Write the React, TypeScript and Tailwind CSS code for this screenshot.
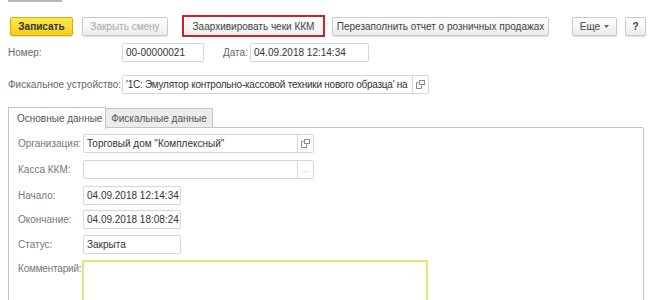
import React from "react";

const font = { fontFamily: '"Liberation Sans", Arial, sans-serif' };

function Btn({ children, className = "" }: { children: React.ReactNode; className?: string }) {
  return (
    <div
      className={
        "flex items-center justify-center h-[19px] rounded-[2px] border border-[#c9c9c9] bg-gradient-to-b from-[#ffffff] to-[#ececec] shadow-[0_1px_1px_rgba(0,0,0,0.12)] text-[10px] text-[#444] whitespace-nowrap " +
        className
      }
    >
      {children}
    </div>
  );
}

function Input({ children, className = "" }: { children?: React.ReactNode; className?: string }) {
  return (
    <div
      className={
        "flex items-center h-[19px] border border-[#d6d6d6] rounded-[2px] bg-white px-[3px] text-[10px] text-[#333] whitespace-nowrap overflow-hidden " +
        className
      }
    >
      {children}
    </div>
  );
}

function OpenIcon() {
  return (
    <svg width="9" height="9" viewBox="0 0 9 9" fill="none" stroke="#8a8a8a" strokeWidth="1">
      <rect x="3.5" y="0.5" width="5" height="4" />
      <path d="M2.5 2.5 H0.5 V8.5 H5.5 V5.5" />
    </svg>
  );
}

function InputWithBtn({
  children,
  className = "",
  btn,
}: {
  children?: React.ReactNode;
  className?: string;
  btn: React.ReactNode;
}) {
  return (
    <div
      className={
        "flex items-stretch h-[19px] border border-[#d6d6d6] rounded-[2px] bg-white text-[10px] text-[#333] " + className
      }
    >
      <div className="flex-1 flex items-center px-[3px] whitespace-nowrap overflow-hidden">{children}</div>
      <div className="w-[16px] border-l border-[#d6d6d6] flex items-center justify-center">{btn}</div>
    </div>
  );
}

export default function App() {
  return (
    <div className="w-[660px] h-[300px] bg-white overflow-hidden relative" style={font}>
      <div className="ml-[8px] w-[54px] h-[2px] bg-[#b8b8b8]" />

      {/* toolbar */}
      <div className="flex items-center mt-[13px] h-[22px]">
        <div className="ml-[10px] w-[63px] h-[19px] flex items-center justify-center rounded-[2px] border border-[#d4b000] bg-gradient-to-b from-[#ffe84d] to-[#f5cf0a] shadow-[0_1px_1px_rgba(0,0,0,0.15)] text-[10px] font-bold text-[#333]">
          Записать
        </div>
        <Btn className="ml-[9px] w-[86px] text-[#aaa]">Закрыть смену</Btn>
        <div className="ml-[14px] w-[143px] h-[22px] border-2 border-[#c8232c] flex">
          <div className="flex-1 flex items-center justify-center bg-gradient-to-b from-[#ffffff] to-[#efefef] text-[10px] text-[#444] whitespace-nowrap">
            Заархивировать чеки ККМ
          </div>
        </div>
        <Btn className="ml-[7px] w-[217px]">Перезаполнить отчет о розничных продажах</Btn>
        <Btn className="ml-[23px] w-[45px] gap-[4px]">
          <span>Еще</span>
          <svg width="5" height="3" viewBox="0 0 5 3">
            <path d="M0 0 H5 L2.5 3 Z" fill="#666" />
          </svg>
        </Btn>
        <Btn className="ml-[8px] w-[21px] font-bold text-[#333]">?</Btn>
      </div>

      {/* Номер / Дата */}
      <div className="flex items-center mt-[6px] h-[19px] text-[10px] text-[#666]">
        <div className="ml-[8px] w-[114px]">Номер:</div>
        <Input className="w-[82px]">00-00000021</Input>
        <div className="ml-[19px] w-[27px]">Дата:</div>
        <Input className="w-[119px]">04.09.2018 12:14:34</Input>
      </div>

      {/* Фискальное устройство */}
      <div className="flex items-center mt-[13px] h-[19px] text-[10px] text-[#666]">
        <div className="ml-[8px] w-[114px] whitespace-nowrap">Фискальное устройство:</div>
        <InputWithBtn className="w-[307px]" btn={<OpenIcon />}>
          <span className="tracking-[-0.25px]">'1С: Эмулятор контрольно-кассовой техники нового образца' на</span>
        </InputWithBtn>
      </div>

      {/* tabs */}
      <div className="flex items-end mt-[12px] ml-[8px] h-[22px]">
        <div className="w-[98px] h-[22px] border border-b-0 border-[#c4c4c4] bg-white flex items-center pl-[8px] text-[10px] text-[#555] relative top-[1px] whitespace-nowrap">
          Основные данные
        </div>
        <div className="w-[107px] h-[20px] border border-l-0 border-[#c4c4c4] bg-[#ececec] flex items-center justify-center text-[10px] text-[#555] whitespace-nowrap">
          Фискальные данные
        </div>
        <div className="w-[430px] border-b border-[#c4c4c4]" />
      </div>

      {/* panel */}
      <div className="ml-[8px] w-[636px] h-[200px] border-l border-r border-[#c4c4c4] pt-[6px] text-[10px] text-[#777]">
        <div className="flex items-center h-[19px]">
          <div className="ml-[9px] w-[65px] whitespace-nowrap">Организация:</div>
          <InputWithBtn className="w-[231px]" btn={<OpenIcon />}>
            Торговый дом "Комплексный"
          </InputWithBtn>
        </div>
        <div className="flex items-center h-[19px] mt-[7px]">
          <div className="ml-[9px] w-[65px] whitespace-nowrap">Касса ККМ:</div>
          <InputWithBtn className="w-[231px]" btn={<span className="text-[#bbb] text-[9px] leading-none">...</span>} />
        </div>
        <div className="flex items-center h-[19px] mt-[7px]">
          <div className="ml-[9px] w-[65px]">Начало:</div>
          <Input className="w-[98px]">04.09.2018 12:14:34</Input>
        </div>
        <div className="flex items-center h-[19px] mt-[5px]">
          <div className="ml-[9px] w-[65px]">Окончание:</div>
          <Input className="w-[98px]">04.09.2018 18:08:24</Input>
        </div>
        <div className="flex items-center h-[19px] mt-[6px]">
          <div className="ml-[9px] w-[65px]">Статус:</div>
          <Input className="w-[98px]">Закрыта</Input>
        </div>
        <div className="flex items-start mt-[6px]">
          <div className="ml-[9px] w-[64px] whitespace-nowrap pt-[1px] tracking-[-0.2px]">Комментарий:</div>
          <div className="w-[346px] h-[60px] border-2 border-[#e6e27a] rounded-[1px] bg-white" />
        </div>
      </div>
    </div>
  );
}
